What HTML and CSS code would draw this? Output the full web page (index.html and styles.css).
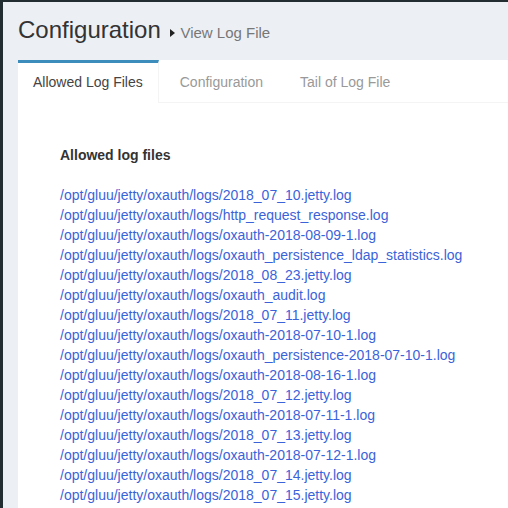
FILE: index.html
```html
<!DOCTYPE html>
<html>
<head>
<meta charset="utf-8">
<link rel="stylesheet" href="styles.css">
</head>
<body>
<div class="wrapper">
  <aside class="sidebar"></aside>
  <main class="content-wrapper">
    <section class="content-header">
      <h1>Configuration <small><span class="caret"></span>View Log File</small></h1>
    </section>
    <section class="content">
      <div class="tabs-box">
        <ul class="nav-tabs">
          <li class="tab active">Allowed Log Files</li>
          <li class="tab">Configuration</li>
          <li class="tab">Tail of Log File</li>
        </ul>
        <div class="tab-content">
          <h3 class="list-title">Allowed log files</h3>
          <ul class="file-list">
            <li><a href="#">/opt/gluu/jetty/oxauth/logs/2018_07_10.jetty.log</a></li>
            <li><a href="#">/opt/gluu/jetty/oxauth/logs/http_request_response.log</a></li>
            <li><a href="#">/opt/gluu/jetty/oxauth/logs/oxauth-2018-08-09-1.log</a></li>
            <li><a href="#">/opt/gluu/jetty/oxauth/logs/oxauth_persistence_ldap_statistics.log</a></li>
            <li><a href="#">/opt/gluu/jetty/oxauth/logs/2018_08_23.jetty.log</a></li>
            <li><a href="#">/opt/gluu/jetty/oxauth/logs/oxauth_audit.log</a></li>
            <li><a href="#">/opt/gluu/jetty/oxauth/logs/2018_07_11.jetty.log</a></li>
            <li><a href="#">/opt/gluu/jetty/oxauth/logs/oxauth-2018-07-10-1.log</a></li>
            <li><a href="#">/opt/gluu/jetty/oxauth/logs/oxauth_persistence-2018-07-10-1.log</a></li>
            <li><a href="#">/opt/gluu/jetty/oxauth/logs/oxauth-2018-08-16-1.log</a></li>
            <li><a href="#">/opt/gluu/jetty/oxauth/logs/2018_07_12.jetty.log</a></li>
            <li><a href="#">/opt/gluu/jetty/oxauth/logs/oxauth-2018-07-11-1.log</a></li>
            <li><a href="#">/opt/gluu/jetty/oxauth/logs/2018_07_13.jetty.log</a></li>
            <li><a href="#">/opt/gluu/jetty/oxauth/logs/oxauth-2018-07-12-1.log</a></li>
            <li><a href="#">/opt/gluu/jetty/oxauth/logs/2018_07_14.jetty.log</a></li>
            <li><a href="#">/opt/gluu/jetty/oxauth/logs/2018_07_15.jetty.log</a></li>
          </ul>
        </div>
      </div>
    </section>
  </main>
</div>
</body>
</html>
```
FILE: styles.css
```css
html, body {
  margin: 0;
  padding: 0;
  height: 100%;
  overflow: hidden;
}
body {
  background: #ecf0f5;
  font-family: "Liberation Sans", Arial, sans-serif;
  font-size: 14px;
  line-height: 20px;
  color: #333;
}
.wrapper {
  display: flex;
  min-height: 100%;
  border-top: 2px solid #222d32;
}
.sidebar {
  width: 3px;
  flex: none;
  background: #222d32;
}
.content-wrapper {
  flex: 1;
  min-width: 0;
}
.content-header {
  padding: 15px 0 0 15px;
}
.content-header h1 {
  margin: 0;
  font-size: 24px;
  line-height: 26px;
  font-weight: normal;
  color: #333;
}
.content-header small {
  font-size: 15px;
  color: #777;
  padding-left: 3px;
}
.caret {
  display: inline-block;
  width: 0;
  height: 0;
  border-top: 4px solid transparent;
  border-bottom: 4px solid transparent;
  border-left: 5px solid #222;
  margin-right: 5px;
  vertical-align: 1px;
}
.content {
  padding: 14px 0 0 15px;
}
.tabs-box {
  background: #fff;
  min-height: 460px;
}
.nav-tabs {
  list-style: none;
  margin: 0;
  padding: 0;
  display: flex;
  border-bottom: 1px solid #f4f4f4;
}
.tab {
  padding: 9px 15px 11px;
  margin-right: 5px;
  border-top: 3px solid transparent;
  border-left: 1px solid transparent;
  border-right: 1px solid transparent;
  color: #999;
  margin-bottom: -1px;
}
.tab.active {
  border-top-color: #3c8dbc;
  border-left: 0;
  border-right: 1px solid #f4f4f4;
  color: #444;
  background: #fff;
}
.tab-content {
  padding: 42px 0 0 42px;
}
.list-title {
  margin: 0 0 20px 0;
  font-size: 14px;
  font-weight: bold;
  line-height: 20px;
  color: #333;
}
.file-list {
  list-style: none;
  margin: 0;
  padding: 0;
}
.file-list a {
  color: #3b63d9;
  text-decoration: none;
}
```
